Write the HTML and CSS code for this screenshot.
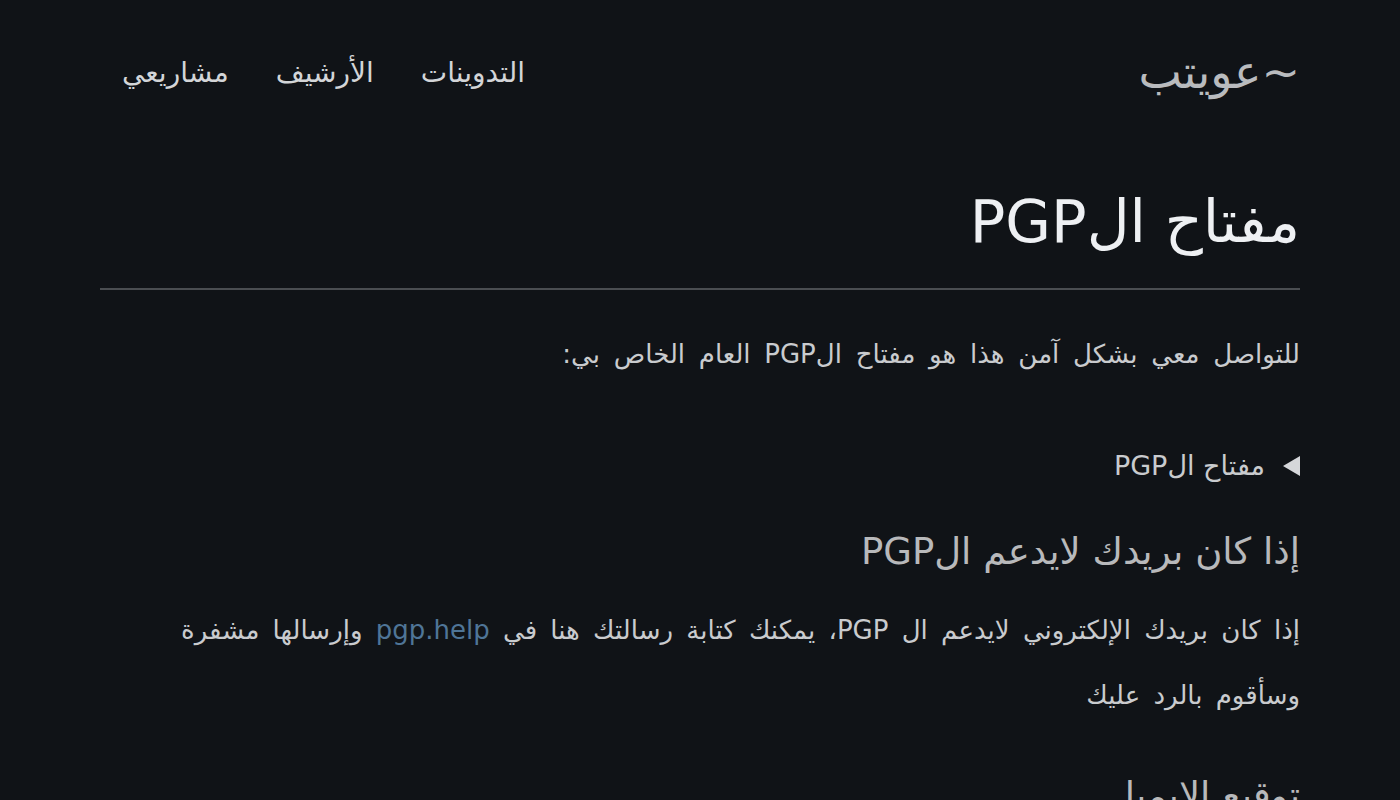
FILE: index.html
```html
<!DOCTYPE html>
<html lang="ar" dir="rtl">
<head>
<meta charset="utf-8">
<title>مفتاح الPGP</title>
<link rel="stylesheet" href="styles.css">
</head>
<body>
<div class="page">
  <header class="site-header">
    <a class="logo" href="#">~عويتب</a>
    <nav class="nav">
      <a href="#">التدوينات</a>
      <a href="#">الأرشيف</a>
      <a href="#">مشاريعي</a>
    </nav>
  </header>
  <main class="content">
    <h1 class="title">مفتاح الPGP</h1>
    <hr class="rule">
    <p class="intro">للتواصل معي بشكل آمن هذا هو مفتاح الPGP العام الخاص بي:</p>
    <details class="key">
      <summary>مفتاح الPGP</summary>
    </details>
    <h2 class="section-title">إذا كان بريدك لايدعم الPGP</h2>
    <p class="body-text">إذا كان بريدك الإلكتروني لايدعم ال PGP، يمكنك كتابة رسالتك هنا في <a href="#">pgp.help</a> وإرسالها مشفرة وسأقوم بالرد عليك</p>
    <h2 class="section-title">توقيع الإيميل</h2>
  </main>
</div>
</body>
</html>
```

FILE: styles.css
```css
html, body {
  margin: 0;
  padding: 0;
  background: #101317;
  color: #c9cbce;
  font-family: "DejaVu Sans", "Noto Sans", sans-serif;
}

.page {
  width: 1200px;
  margin: 0 auto;
  direction: rtl;
}

a {
  color: inherit;
  text-decoration: none;
}

.site-header {
  display: flex;
  justify-content: space-between;
  align-items: center;
  height: 144px;
}

.logo {
  font-size: 46px;
  color: #b9bbbe;
  line-height: 1;
}

.nav {
  display: flex;
  gap: 47px;
  padding-left: 22px;
  font-size: 28px;
  color: #d3d5d8;
}

.title {
  margin: 0;
  padding-top: 12px;
  font-size: 59px;
  font-weight: normal;
  color: #eef0f3;
  line-height: 132px;
}

.rule {
  margin: 0;
  border: 0;
  height: 2px;
  background: #4a4d51;
}

.intro {
  margin: 0;
  padding-top: 44px;
  line-height: 40px;
  font-size: 26px;
  word-spacing: 5.5px;
}

.key {
  margin-top: 74px;
  font-size: 27px;
  line-height: 36px;
}

.key summary {
  list-style: none;
  display: flex;
  align-items: center;
  gap: 18px;
  cursor: pointer;
}

.key summary::-webkit-details-marker {
  display: none;
}

.key summary::before {
  content: "";
  width: 0;
  height: 0;
  border-top: 10px solid transparent;
  border-bottom: 10px solid transparent;
  border-right: 17px solid #d5d7da;
}

.section-title {
  margin: 0;
  padding-top: 38px;
  font-size: 37px;
  font-weight: normal;
  color: #b8b9bb;
  line-height: 60px;
}

.body-text {
  margin: 16px 0 0;
  font-size: 26px;
  word-spacing: 5px;
  line-height: 65px;
}

.body-text a {
  color: #4f7597;
}
```
